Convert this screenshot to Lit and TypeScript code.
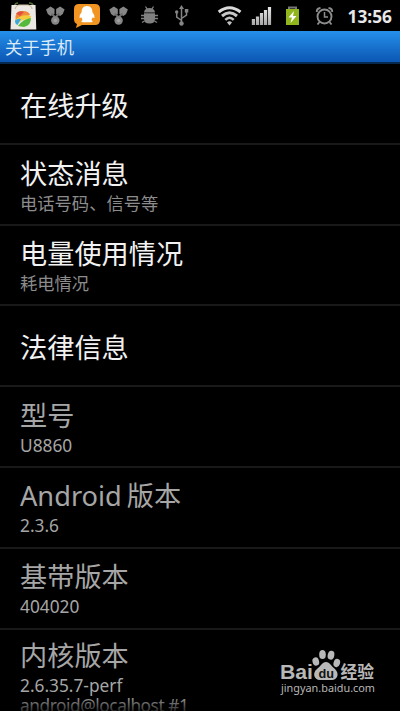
import { LitElement, html, css, svg } from "lit";
import { customElement, property } from "lit/decorators.js";

interface Item {
  title: string;
  lines: string[];
  dim?: boolean;
}

const ITEMS: Item[] = [
  { title: "在线升级", lines: [] },
  { title: "状态消息", lines: ["电话号码、信号等"] },
  { title: "电量使用情况", lines: ["耗电情况"] },
  { title: "法律信息", lines: [] },
  { title: "型号", lines: ["U8860"], dim: true },
  { title: "Android 版本", lines: ["2.3.6"], dim: true },
  { title: "基带版本", lines: ["404020"], dim: true },
  { title: "内核版本", lines: ["2.6.35.7-perf", "android@localhost #1"], dim: true },
];

const nodes = svg`
  <g fill="#868686">
    <path d="M0 4 4.500 1 8.500 3.500 8.500 8.500 4.500 10.500 1.800 8.500Z" />
    <path d="M18.600 4 14.100 1 10.100 3.500 10.100 8.500 14.100 10.500 16.800 8.500Z" />
    <path d="M5.500 8 9.300 12 13.100 8" fill="none" stroke="#707070" stroke-width="2" />
    <circle cx="9.300" cy="15" r="4.200" />
  </g>
  <circle cx="9.300" cy="15" r="1.800" fill="#a0a0a0" />`;

@customElement("status-bar")
export class StatusBar extends LitElement {
  static styles = css`
    :host {
      display: block;
      height: 31px;
      flex: none;
      background: #000;
    }
    svg { display: block; width: 400px; height: 31px; }
    .clock {
      font: 700 17px "Noto Sans", "Open Sans", sans-serif;
      fill: #e8e8e8;
    }
  `;

  render() {
    return html`<svg viewBox="0 0 400 31">
      <defs>
        <linearGradient id="sig" x1="0" y1="0" x2="0" y2="1">
          <stop offset="0" stop-color="#e8e8e8" /><stop offset="1" stop-color="#a8a8a8" />
        </linearGradient>
      </defs>
      <g>
        <path d="M14 7Q15 3 18 3M29 3Q33 3 34 7" fill="none" stroke="#56703c" stroke-width="1.300" />
        <path d="M11.500 5H35.500L36.300 29.500H10.500Z" fill="#ece9e4" />
        <path d="M15 9Q16 5.500 19 5H28Q32 6 32 9" fill="none" stroke="#cbbd9e" stroke-width="1.200" />
        <path d="M15.500 16Q17 10.500 23 11Q29 11 30 15L15.500 20Z" fill="#f08a3c" />
        <path d="M16 13.500Q20 10 24 12L20 16Z" fill="#e0503c" />
        <path d="M15 20Q22 13.500 31 16L30 20Q22 18 17 25Q15 23 15 20Z" fill="#f3cd3a" />
        <path d="M30.800 18Q31.500 25 24 27L18 26Q23 19 30.800 18Z" fill="#55b93c" />
        <path d="M15 20.500Q18 18 21 19L17.500 25Q15 24 15 20.500Z" fill="#38a9dc" />
      </g>
      <g transform="translate(46 5.500)">${nodes}</g>
      <g>
        <path d="M79 4H95Q100 4 100 9V20Q100 25 95 25H82L76 28 77 24Q74 23 74 19V9Q74 4 79 4Z" fill="#f29422" />
        <path d="M87 6C91 6 92.500 9 92.300 12Q95 15 94.500 18L92.500 17.500 91.500 20Q94 22 91 22.300H83Q80 22 82.500 20L81.500 17.500 79.500 18Q79 15 81.700 12C81.500 9 83 6 87 6Z" fill="#fff" />
      </g>
      <g transform="translate(109.300 5.500)">${nodes}</g>
      <g fill="#808080" stroke="#808080">
        <path d="M144 12.500Q144.500 8 149.500 8T155 12.500Z" stroke="none" />
        <path d="M144 13.300H155V19Q155 23.500 149.500 23.500T144 19Z" stroke="none" />
        <path d="M147 9 145.500 6.500M152 9 153.500 6.500M144 15.500H141M155 15.500H158M144 18.500H141M155 18.500H158M144.500 21 142 22.500M154.500 21 157 22.500" fill="none" stroke-width="1.300" />
      </g>
      <g fill="none" stroke="#858585" stroke-width="1.500">
        <path d="M181.500 8V23M181.500 20.500 176.700 17V12M181.500 18.500 186.500 15V11" />
        <path d="M181.500 5 184 9H179Z" fill="#858585" stroke="none" />
        <circle cx="181.500" cy="23.500" r="2.200" fill="#858585" stroke="none" />
        <circle cx="176.700" cy="12" r="1.700" fill="#858585" stroke="none" />
        <path d="M184.800 9H188.300V12.500H184.800Z" fill="#858585" stroke="none" />
      </g>
      <g fill="none" stroke="#dadada" stroke-width="3">
        <path d="M218.700 12Q229.500 3.500 240.500 12" />
        <path d="M222 16Q229.500 9.500 237 16" stroke="#c8c8c8" />
        <path d="M225.300 19.800Q229.500 15.500 233.700 19.800" stroke="#c0c0c0" stroke-width="2.500" />
        <path d="M227 22.500Q229.500 20 232 22.500L229.500 25.500Z" fill="#c0c0c0" stroke="none" />
      </g>
      <path fill="url(#sig)" d="M251.800 19H255V25H251.800Z M255.900 16.500H259.100V25H255.900Z M259.900 13H263.100V25H259.900Z M263.900 10H267.100V25H263.900Z M267.900 7H271.100V25H267.900Z" />
      <g>
        <path d="M289 9V7.500H296V9" fill="none" stroke="#777" stroke-width="2" />
        <path d="M286 9H299V25H286Z" fill="#91b51c" />
        <path d="M294 11 288.500 17.500H292L290.500 23 296.500 16H293Z" fill="#fff" />
      </g>
      <g fill="none" stroke="#8c8c8c" stroke-width="1.900">
        <circle cx="324.500" cy="16.500" r="7" />
        <path d="M324.500 12V17H328" stroke-width="1.500" />
        <path d="M316.800 12Q316.500 8.500 320.500 8M332.200 12Q332.500 8.500 328.500 8M319.500 22 317.500 24.500M329.500 22 331.500 24.500" />
      </g>
      <text class="clock" x="347.500" y="22.500" textLength="44.500" lengthAdjust="spacingAndGlyphs">13:56</text>
    </svg>`;
  }
}

@customElement("info-row")
export class InfoRow extends LitElement {
  @property({ attribute: false }) item!: Item;

  static styles = css`
    :host {
      display: block;
      box-sizing: border-box;
      height: 80.800px;
      flex: none;
      border-bottom: 2px solid #191919;
      padding: 11px 20px 0;
      white-space: nowrap;
    }
    :host(:nth-child(3)),
    :host(:nth-child(6)),
    :host(:nth-child(7)) {
      padding-top: 10px;
    }
    :host(:last-child) {
      padding-top: 8px;
      border-bottom: 0;
    }
    .title {
      font-size: 27.200px;
      line-height: 36px;
      color: #f2f2f2;
      word-spacing: -2px;
    }
    .line {
      font-size: 17.300px;
      line-height: 20px;
      color: #8c8c8c;
    }
    .single { padding-top: 12.500px; }
    .title + .line { margin-top: 2px; }
    .dim { color: #a6a6a6; }
    .dim ~ .line { color: #a6a6a6; }
    .line + .line {
      letter-spacing: -0.450px;
    }
  `;

  render() {
    const { title, lines, dim } = this.item;
    return html`<div class="title ${dim ? "dim" : ""} ${lines.length ? "" : "single"}">${title}</div>
      ${lines.map((l) => html`<div class="line">${l}</div>`)}`;
  }
}

@customElement("site-mark")
export class SiteMark extends LitElement {
  static styles = css`
    :host { display: block; }
    svg { display: block; }
    text { fill: #b8b8b8; font-family: "Noto Sans", "Noto Sans CJK SC", sans-serif; }
    .brand { font: 700 20.500px "Liberation Sans", sans-serif; }
    .inner { font: 700 13px "Liberation Sans", sans-serif; fill: #111; }
    .cjk { font: 700 17px "Noto Sans CJK SC", sans-serif; }
    .url { font-size: 11px; }
  `;

  render() {
    return html`<svg width="100" height="48" viewBox="278 648 100 48">
      <text class="brand" x="280" y="678.700" textLength="33" lengthAdjust="spacingAndGlyphs">Bai</text>
      <g fill="#b8b8b8">
        <ellipse cx="315.800" cy="661.500" rx="3.300" ry="4.200" transform="rotate(-15 315.800 661.500)" />
        <ellipse cx="322.500" cy="654.500" rx="3.300" ry="4.600" />
        <ellipse cx="331" cy="655.200" rx="3.300" ry="4.500" transform="rotate(12 331 655.200)" />
        <ellipse cx="336.800" cy="663" rx="3.200" ry="4.200" transform="rotate(18 336.800 663)" />
        <path d="M326 662C330 662 331 666 335 669C340 674 337 680 332 680H320C314 680 312 673 317 669C321 666 322 662 326 662Z" />
      </g>
      <text class="inner" x="318.500" y="677.500" textLength="15.500" lengthAdjust="spacingAndGlyphs">du</text>
      <text class="cjk" x="340.500" y="678.300" textLength="33.500" lengthAdjust="spacingAndGlyphs">经验</text>
      <text class="url" x="281" y="691.700" textLength="94" lengthAdjust="spacingAndGlyphs">jingyan.baidu.com</text>
    </svg>`;
  }
}

@customElement("app-root")
export class AppRoot extends LitElement {
  static styles = css`
    :host {
      display: flex;
      flex-direction: column;
      position: relative;
      height: 711px;
      overflow: hidden;
      background: #000;
      font-family: "Noto Sans", "Noto Sans CJK SC", sans-serif;
    }
    .heading {
      flex: none;
      box-sizing: border-box;
      height: 33px;
      padding-left: 5px;
      border-bottom: 2px solid #06294f;
      background: linear-gradient(#2590ea, #0b56b3);
      font-size: 17.300px;
      line-height: 33px;
      color: #dbeaf8;
    }
    .list {
      flex: 1;
      min-height: 0;
      overflow: hidden;
      display: flex;
      flex-direction: column;
    }
    .fade {
      position: absolute;
      inset: auto 0 0;
      height: 15px;
      background: linear-gradient(transparent, #000b);
    }
    site-mark {
      position: absolute;
      left: 278px;
      top: 648px;
    }
  `;

  render() {
    return html`<status-bar></status-bar>
      <div class="heading">关于手机</div>
      <div class="list">${ITEMS.map((i) => html`<info-row .item=${i}></info-row>`)}</div>
      <div class="fade"></div>
      <site-mark></site-mark>`;
  }
}
